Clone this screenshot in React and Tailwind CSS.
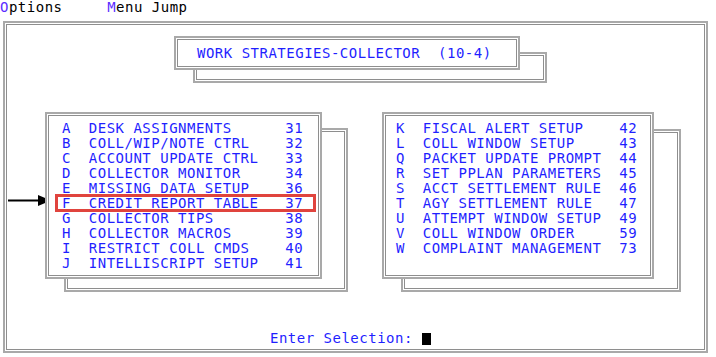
import React from 'react';

const mono = { fontFamily: '"DejaVu Sans Mono", "Liberation Mono", monospace' };

const leftItems = [
  ['A', 'DESK ASSIGNMENTS', '31'],
  ['B', 'COLL/WIP/NOTE CTRL', '32'],
  ['C', 'ACCOUNT UPDATE CTRL', '33'],
  ['D', 'COLLECTOR MONITOR', '34'],
  ['E', 'MISSING DATA SETUP', '36'],
  ['F', 'CREDIT REPORT TABLE', '37'],
  ['G', 'COLLECTOR TIPS', '38'],
  ['H', 'COLLECTOR MACROS', '39'],
  ['I', 'RESTRICT COLL CMDS', '40'],
  ['J', 'INTELLISCRIPT SETUP', '41'],
];

const rightItems = [
  ['K', 'FISCAL ALERT SETUP', '42'],
  ['L', 'COLL WINDOW SETUP', '43'],
  ['Q', 'PACKET UPDATE PROMPT', '44'],
  ['R', 'SET PPLAN PARAMETERS', '45'],
  ['S', 'ACCT SETTLEMENT RULE', '46'],
  ['T', 'AGY SETTLEMENT RULE', '47'],
  ['U', 'ATTEMPT WINDOW SETUP', '49'],
  ['V', 'COLL WINDOW ORDER', '59'],
  ['W', 'COMPLAINT MANAGEMENT', '73'],
];

// double gray line frame used for every box and shadow
function Double({ className = '', innerClass = '', children }) {
  return (
    <div className={`border-2 border-[#a9a9a9] p-[1px] ${className}`}>
      <div className={`h-full w-full border border-[#8e8e8e] ${innerClass}`}>{children}</div>
    </div>
  );
}

function MenuBox({ items, pl, width, height, shadow, children }) {
  return (
    <div className="relative shrink-0" style={{ width, height }}>
      <div
        className="absolute z-0"
        style={{ left: shadow.left, top: shadow.top, width: shadow.width, height: shadow.height }}
      >
        <Double className="h-full w-full" />
      </div>
      <Double className="relative z-10 h-full w-full bg-white" innerClass="bg-white">
        <div className="pt-[5px] leading-[15px] text-[#1f1fff]" style={{ paddingLeft: pl }}>
          {items.map(([k, d, n]) => (
            <div key={k} className="whitespace-pre">
              {`${k}  ${d.padEnd(22)}${n}`}
            </div>
          ))}
        </div>
      </Double>
      {children}
    </div>
  );
}

export default function App() {
  return (
    <div
      className="relative w-[716px] h-[357px] overflow-hidden bg-white text-[14px] tracking-[0.5px] text-black"
      style={mono}
    >
      {/* menu bar */}
      <div className="h-[21px] leading-[15px] whitespace-pre">
        <span className="text-[#5b2cff]">O</span>ptions{'     '}
        <span className="text-[#5b2cff]">M</span>enu Jump
      </div>

      {/* main frame */}
      <Double className="ml-[3px] w-[705px] h-[332px]" innerClass="flex flex-col">
        {/* title */}
        <div className="relative ml-[167px] mt-[11px] w-[346px] h-[34px]">
          <div className="absolute left-[19px] top-[16px] w-[354px] h-[31px] z-0">
            <Double className="h-full w-full" />
          </div>
          <Double className="relative z-10 h-full w-full bg-white" innerClass="bg-white flex items-center">
            <div className="pl-[19px] whitespace-pre text-[#1f1fff] leading-[15px]">
              WORK STRATEGIES-COLLECTOR  (10-4)
            </div>
          </Double>
        </div>

        {/* option boxes */}
        <div className="flex mt-[42px] ml-[38px] gap-[60px]">
          <MenuBox
            items={leftItems}
            pl="13px"
            width="277px"
            height="167px"
            shadow={{ left: '19px', top: '16px', width: '284px', height: '164px' }}
          >
            <div className="absolute z-20 left-[10px] top-[82px] w-[261px] h-[18px] border-[3px] border-[#e0443e]" />
          </MenuBox>
          <MenuBox
            items={rightItems}
            pl="10px"
            width="272px"
            height="167px"
            shadow={{ left: '19px', top: '17px', width: '280px', height: '163px' }}
          />
        </div>

        {/* prompt */}
        <div className="mt-[52px] ml-[263px] flex items-center h-[15px] leading-[15px] whitespace-pre text-[#1f1fff]">
          Enter Selection:{' '}
          <span className="inline-block w-[9px] h-[12px] bg-black" />
        </div>
      </Double>

      {/* pointer arrow */}
      <svg className="absolute left-0 top-0" width="60" height="220" viewBox="0 0 60 220">
        <line x1="8" y1="200.5" x2="42" y2="200.5" stroke="#000" strokeWidth="2" />
        <polygon points="38,195 51,200.5 38,206" fill="#000" />
      </svg>
    </div>
  );
}
